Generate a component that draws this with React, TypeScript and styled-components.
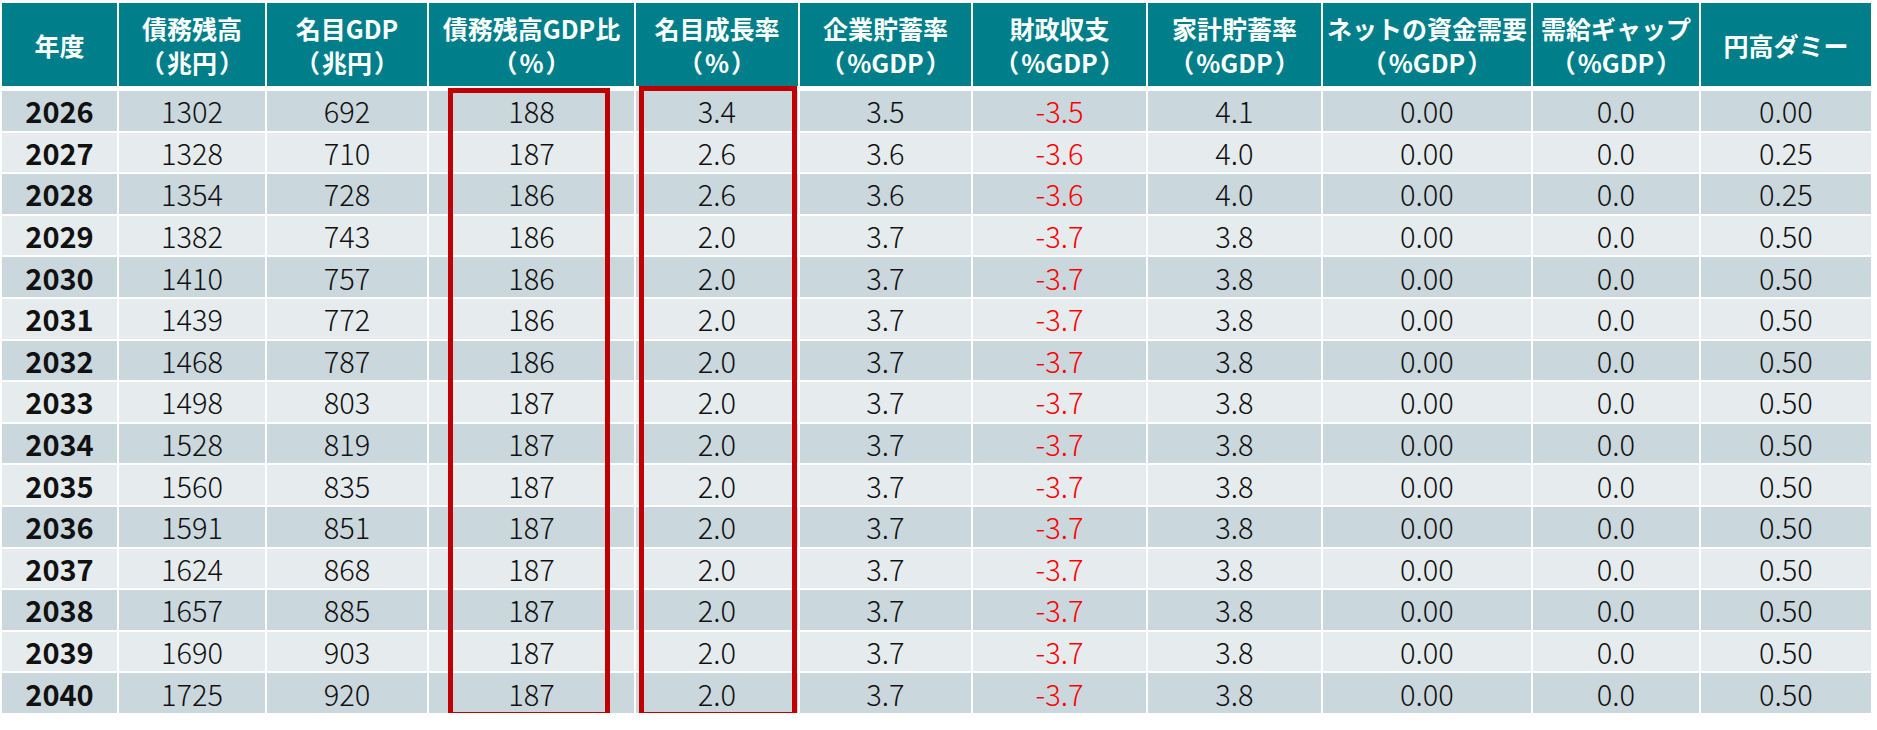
import React from "react";
import styled, { createGlobalStyle } from "styled-components";

const GlobalStyle = createGlobalStyle`
  html, body {
    margin: 0;
    padding: 0;
    background: #ffffff;
  }
  body {
    font-family: "Noto Sans CJK JP", "Noto Sans", sans-serif;
  }
`;

const COLS = "115px 146px 160px 205px 162px 171px 173px 173px 208px 166px 170px";

const Page = styled.div`
  padding: 3px 0 0 2px;
`;

const Frame = styled.div`
  position: relative;
  width: 1869px;
`;

const HeaderRow = styled.div`
  display: grid;
  grid-template-columns: ${COLS};
  column-gap: 2px;
  height: 83px;
  margin-bottom: 5px;
`;

const HeadCell = styled.div`
  background: #007f8a;
  color: #ffffff;
  font-family: "Noto Sans CJK JP", sans-serif;
  font-weight: 700;
  font-size: 25px;
  line-height: 34px;
  display: flex;
  flex-direction: column;
  align-items: center;
  justify-content: center;
  white-space: nowrap;
  text-align: center;
`;

const Paren = styled.span`
  display: inline-block;
  margin: 0 2px;
`;

const Body = styled.div`
  display: grid;
  grid-template-columns: ${COLS};
  grid-auto-rows: 39.6px;
  column-gap: 2px;
  row-gap: 2px;
`;

const Cell = styled.div<{ $dark: boolean; $bold?: boolean; $neg?: boolean }>`
  background: ${(p) => (p.$dark ? "#cad7dc" : "#e6ecee")};
  color: ${(p) => (p.$neg ? "#ff0000" : "#111111")};
  font-family: "Noto Sans CJK JP", sans-serif;
  font-weight: ${(p) => (p.$bold ? 700 : 300)};
  font-size: 29px;
  display: flex;
  align-items: center;
  justify-content: center;
  line-height: 1;
`;

const Highlight = styled.div<{ $left: number; $top: number; $w: number; $h: number }>`
  position: absolute;
  left: ${(p) => p.$left}px;
  top: ${(p) => p.$top}px;
  width: ${(p) => p.$w}px;
  height: ${(p) => p.$h}px;
  box-sizing: border-box;
  border: 5px solid #c00000;
  pointer-events: none;
`;

const headers: [string, string?][] = [
  ["年度"],
  ["債務残高", "兆円"],
  ["名目GDP", "兆円"],
  ["債務残高GDP比", "%"],
  ["名目成長率", "%"],
  ["企業貯蓄率", "%GDP"],
  ["財政収支", "%GDP"],
  ["家計貯蓄率", "%GDP"],
  ["ネットの資金需要", "%GDP"],
  ["需給ギャップ", "%GDP"],
  ["円高ダミー"],
];

type Row = [number, number, number, number, string, string, string, string, string];

const rows: Row[] = [
  [2026, 1302, 692, 188, "3.4", "3.5", "-3.5", "4.1", "0.00"],
  [2027, 1328, 710, 187, "2.6", "3.6", "-3.6", "4.0", "0.25"],
  [2028, 1354, 728, 186, "2.6", "3.6", "-3.6", "4.0", "0.25"],
  [2029, 1382, 743, 186, "2.0", "3.7", "-3.7", "3.8", "0.50"],
  [2030, 1410, 757, 186, "2.0", "3.7", "-3.7", "3.8", "0.50"],
  [2031, 1439, 772, 186, "2.0", "3.7", "-3.7", "3.8", "0.50"],
  [2032, 1468, 787, 186, "2.0", "3.7", "-3.7", "3.8", "0.50"],
  [2033, 1498, 803, 187, "2.0", "3.7", "-3.7", "3.8", "0.50"],
  [2034, 1528, 819, 187, "2.0", "3.7", "-3.7", "3.8", "0.50"],
  [2035, 1560, 835, 187, "2.0", "3.7", "-3.7", "3.8", "0.50"],
  [2036, 1591, 851, 187, "2.0", "3.7", "-3.7", "3.8", "0.50"],
  [2037, 1624, 868, 187, "2.0", "3.7", "-3.7", "3.8", "0.50"],
  [2038, 1657, 885, 187, "2.0", "3.7", "-3.7", "3.8", "0.50"],
  [2039, 1690, 903, 187, "2.0", "3.7", "-3.7", "3.8", "0.50"],
  [2040, 1725, 920, 187, "2.0", "3.7", "-3.7", "3.8", "0.50"],
];

export default function App() {
  return (
    <Page>
      <GlobalStyle />
      <Frame>
        <HeaderRow>
          {headers.map(([a, b], i) => (
            <HeadCell key={i}>
              <span>{a}</span>
              {b && (
                <span>
                  <Paren>（</Paren>
                  {b}
                  <Paren>）</Paren>
                </span>
              )}
            </HeadCell>
          ))}
        </HeaderRow>
        <Body>
          {rows.map((r, ri) => {
            const dark = ri % 2 === 0;
            const cells = [
              String(r[0]),
              String(r[1]),
              String(r[2]),
              String(r[3]),
              r[4],
              r[5],
              r[6],
              r[7],
              "0.00",
              "0.0",
              r[8],
            ];
            return cells.map((v, ci) => (
              <Cell
                key={`${ri}-${ci}`}
                $dark={dark}
                $bold={ci === 0}
                $neg={v.startsWith("-")}
              >
                {v}
              </Cell>
            ));
          })}
        </Body>
        <Highlight $left={446} $top={85} $w={162} $h={629} />
        <Highlight $left={637} $top={83} $w={158} $h={631} />
      </Frame>
    </Page>
  );
}
